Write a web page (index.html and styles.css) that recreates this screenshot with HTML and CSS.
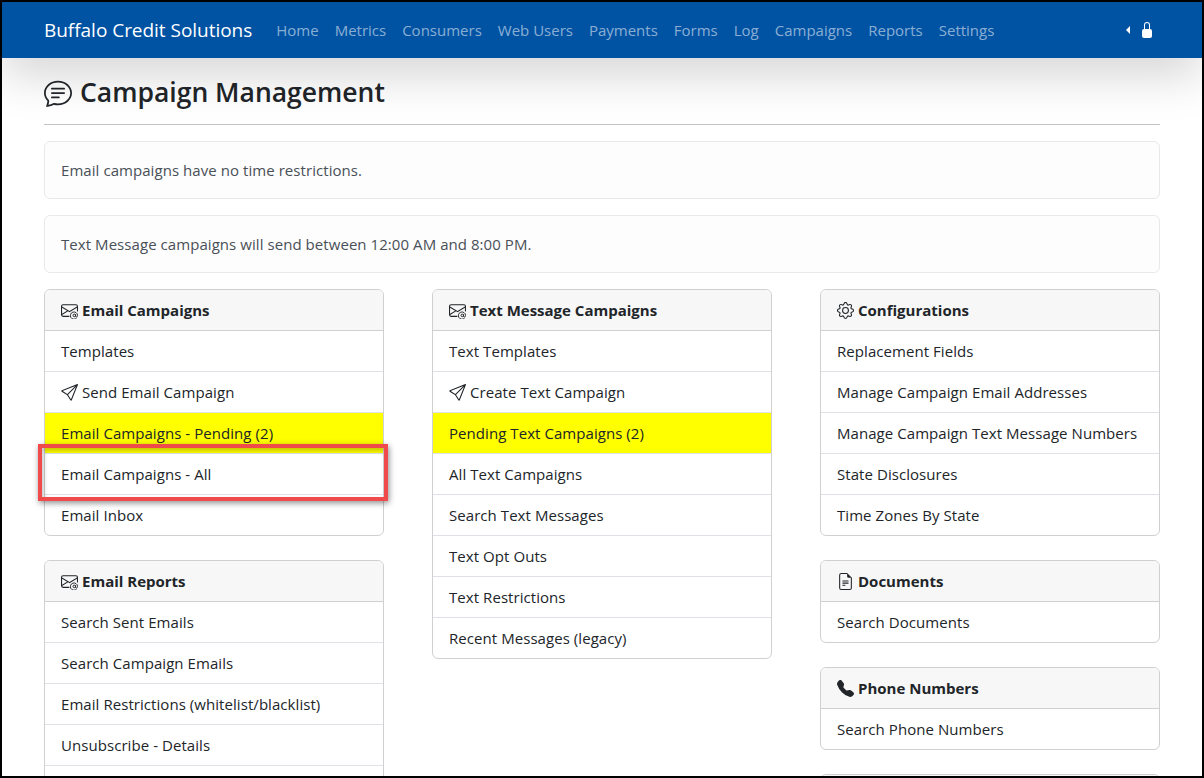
FILE: index.html
```html
<!DOCTYPE html>
<html lang="en">
<head>
<meta charset="utf-8">
<title>Campaign Management</title>
<link rel="stylesheet" href="styles.css">
</head>
<body>
<div class="frame">
  <nav class="navbar">
    <a class="brand">Buffalo Credit Solutions</a>
    <ul class="nav-links">
      <li>Home</li><li>Metrics</li><li>Consumers</li><li>Web Users</li><li>Payments</li><li>Forms</li><li>Log</li><li>Campaigns</li><li>Reports</li><li>Settings</li>
    </ul>
    <div class="nav-right">
      <span class="caret"></span>
      <svg class="lock" viewBox="0 0 16 16" fill="currentColor"><path d="M8 1a2 2 0 0 1 2 2v4H6V3a2 2 0 0 1 2-2zm3 6V3a3 3 0 0 0-6 0v4a2 2 0 0 0-2 2v5a2 2 0 0 0 2 2h6a2 2 0 0 0 2-2V9a2 2 0 0 0-2-2z"/></svg>
    </div>
  </nav>
  <main class="page">
    <h1 class="title">
      <svg class="title-icon" viewBox="0 0 16 16" fill="currentColor"><path d="M2.678 11.894a1 1 0 0 1 .287.801 10.97 10.97 0 0 1-.398 2c1.395-.323 2.247-.697 2.634-.893a1 1 0 0 1 .71-.074A8.06 8.06 0 0 0 8 14c3.996 0 7-2.807 7-6 0-3.192-3.004-6-7-6S1 4.808 1 8c0 1.468.617 2.83 1.678 3.894zm-.493 3.905a21.682 21.682 0 0 1-.713.129c-.2.032-.352-.176-.273-.362a9.68 9.68 0 0 0 .244-.637l.003-.01c.248-.72.45-1.548.524-2.319C.743 11.37 0 9.76 0 8c0-3.866 3.582-7 8-7s8 3.134 8 7-3.582 7-8 7a9.06 9.06 0 0 1-2.347-.306c-.52.263-1.639.742-3.468 1.105z"/><path d="M4 5.5a.5.5 0 0 1 .5-.5h7a.5.5 0 0 1 0 1h-7a.5.5 0 0 1-.5-.5zM4 8a.5.5 0 0 1 .5-.5h7a.5.5 0 0 1 0 1h-7A.5.5 0 0 1 4 8zm0 2.5a.5.5 0 0 1 .5-.5h4a.5.5 0 0 1 0 1h-4a.5.5 0 0 1-.5-.5z"/></svg>
      Campaign Management
    </h1>
    <hr class="rule">
    <div class="notice">Email campaigns have no time restrictions.</div>
    <div class="notice">Text Message campaigns will send between 12:00 AM and 8:00 PM.</div>
    <div class="columns">
      <div class="col">
        <section class="card">
          <header class="card-head"><svg class="ico" viewBox="0 0 16 16" fill="currentColor"><use href="#i-env"/></svg>Email Campaigns</header>
          <div class="item">Templates</div>
          <div class="item"><svg class="ico" viewBox="0 0 16 16" fill="currentColor"><use href="#i-send"/></svg>Send Email Campaign</div>
          <div class="item hot">Email Campaigns - Pending (2)</div>
          <div class="item">Email Campaigns - All</div>
          <div class="item">Email Inbox</div>
        </section>
        <section class="card">
          <header class="card-head"><svg class="ico" viewBox="0 0 16 16" fill="currentColor"><use href="#i-env"/></svg>Email Reports</header>
          <div class="item">Search Sent Emails</div>
          <div class="item">Search Campaign Emails</div>
          <div class="item">Email Restrictions (whitelist/blacklist)</div>
          <div class="item">Unsubscribe - Details</div>
          <div class="item">&nbsp;</div>
        </section>
      </div>
      <div class="col">
        <section class="card">
          <header class="card-head"><svg class="ico" viewBox="0 0 16 16" fill="currentColor"><use href="#i-env"/></svg>Text Message Campaigns</header>
          <div class="item">Text Templates</div>
          <div class="item"><svg class="ico" viewBox="0 0 16 16" fill="currentColor"><use href="#i-send"/></svg>Create Text Campaign</div>
          <div class="item hot">Pending Text Campaigns (2)</div>
          <div class="item">All Text Campaigns</div>
          <div class="item">Search Text Messages</div>
          <div class="item">Text Opt Outs</div>
          <div class="item">Text Restrictions</div>
          <div class="item">Recent Messages (legacy)</div>
        </section>
      </div>
      <div class="col">
        <section class="card">
          <header class="card-head"><svg class="ico" viewBox="0 0 16 16" fill="currentColor"><path d="M8 4.754a3.246 3.246 0 1 0 0 6.492 3.246 3.246 0 0 0 0-6.492zM5.754 8a2.246 2.246 0 1 1 4.492 0 2.246 2.246 0 0 1-4.492 0z"/><path d="M9.796 1.343c-.527-1.79-3.065-1.79-3.592 0l-.094.319a.873.873 0 0 1-1.255.52l-.292-.16c-1.64-.892-3.433.902-2.54 2.541l.159.292a.873.873 0 0 1-.52 1.255l-.319.094c-1.79.527-1.79 3.065 0 3.592l.319.094a.873.873 0 0 1 .52 1.255l-.16.292c-.892 1.64.901 3.434 2.541 2.54l.292-.159a.873.873 0 0 1 1.255.52l.094.319c.527 1.79 3.065 1.79 3.592 0l.094-.319a.873.873 0 0 1 1.255-.52l.292.16c1.64.893 3.434-.902 2.54-2.541l-.159-.292a.873.873 0 0 1 .52-1.255l.319-.094c1.79-.527 1.79-3.065 0-3.592l-.319-.094a.873.873 0 0 1-.52-1.255l.16-.292c.893-1.64-.902-3.433-2.541-2.54l-.292.159a.873.873 0 0 1-1.255-.52l-.094-.319zm-2.633.283c.246-.835 1.428-.835 1.674 0l.094.319a1.873 1.873 0 0 0 2.693 1.115l.291-.16c.764-.415 1.6.42 1.184 1.185l-.159.292a1.873 1.873 0 0 0 1.116 2.692l.318.094c.835.246.835 1.428 0 1.674l-.319.094a1.873 1.873 0 0 0-1.115 2.693l.16.291c.415.764-.42 1.6-1.185 1.184l-.291-.159a1.873 1.873 0 0 0-2.693 1.116l-.094.318c-.246.835-1.428.835-1.674 0l-.094-.319a1.873 1.873 0 0 0-2.692-1.115l-.292.16c-.764.415-1.6-.42-1.184-1.185l.159-.291A1.873 1.873 0 0 0 1.945 8.93l-.319-.094c-.835-.246-.835-1.428 0-1.674l.319-.094A1.873 1.873 0 0 0 3.06 4.377l-.16-.292c-.415-.764.42-1.6 1.185-1.184l.292.159a1.873 1.873 0 0 0 2.692-1.115l.094-.319z"/></svg>Configurations</header>
          <div class="item">Replacement Fields</div>
          <div class="item">Manage Campaign Email Addresses</div>
          <div class="item">Manage Campaign Text Message Numbers</div>
          <div class="item">State Disclosures</div>
          <div class="item">Time Zones By State</div>
        </section>
        <section class="card">
          <header class="card-head"><svg class="ico" viewBox="0 0 16 16" fill="currentColor"><path d="M5.5 7a.5.5 0 0 0 0 1h5a.5.5 0 0 0 0-1h-5zM5 9.5a.5.5 0 0 1 .5-.5h5a.5.5 0 0 1 0 1h-5a.5.5 0 0 1-.5-.5zm0 2a.5.5 0 0 1 .5-.5h2a.5.5 0 0 1 0 1h-2a.5.5 0 0 1-.5-.5z"/><path d="M9.5 0H4a2 2 0 0 0-2 2v12a2 2 0 0 0 2 2h8a2 2 0 0 0 2-2V4.5L9.5 0zm0 1v2A1.5 1.5 0 0 0 11 4.5h2V14a1 1 0 0 1-1 1H4a1 1 0 0 1-1-1V2a1 1 0 0 1 1-1h5.5z"/></svg>Documents</header>
          <div class="item">Search Documents</div>
        </section>
        <section class="card">
          <header class="card-head"><svg class="ico" viewBox="0 0 16 16" fill="currentColor"><path d="M1.885.511a1.745 1.745 0 0 1 2.61.163L6.29 2.98c.329.423.445.974.315 1.494l-.547 2.19a.678.678 0 0 0 .178.643l2.457 2.457a.678.678 0 0 0 .644.178l2.189-.547a1.745 1.745 0 0 1 1.494.315l2.306 1.794c.829.645.905 1.87.163 2.611l-1.034 1.034c-.74.74-1.846 1.065-2.877.702a18.634 18.634 0 0 1-7.01-4.42 18.634 18.634 0 0 1-4.42-7.009c-.362-1.03-.037-2.137.703-2.877L1.885.511z"/></svg>Phone Numbers</header>
          <div class="item">Search Phone Numbers</div>
        </section>
        <section class="card">
          <header class="card-head">&nbsp;</header>
        </section>
      </div>
    </div>
  </main>
  <div class="callout"></div>
</div>
<svg class="defs" aria-hidden="true">
  <symbol id="i-env" viewBox="0 0 16 16">
    <path d="M2 2a2 2 0 0 0-2 2v8.01A2 2 0 0 0 2 14h5.5a.5.5 0 0 0 0-1H2a1 1 0 0 1-.966-.741l5.64-3.471L8 9.583l7-4.2V8.5a.5.5 0 0 0 1 0V4a2 2 0 0 0-2-2H2Zm3.708 6.208L1 11.105V5.383l4.708 2.825ZM1 4.217V4a1 1 0 0 1 1-1h12a1 1 0 0 1 1 1v.217l-7 4.2-7-4.2Z"/>
    <path fill="none" stroke="currentColor" stroke-width=".9" d="M14.6 15.2a3.4 3.4 0 1 1 1-2.6c0 1.9-1.9 1.9-1.9.6v-1.6M13.7 12.6a1.2 1.2 0 1 1-2.4 0 1.2 1.2 0 0 1 2.4 0Z"/>
  </symbol>
  <symbol id="i-send" viewBox="0 0 16 16">
    <path d="M15.854.146a.5.5 0 0 1 .11.54l-5.819 14.547a.75.75 0 0 1-1.329.124l-3.178-4.995L.643 7.184a.75.75 0 0 1 .124-1.33L15.314.037a.5.5 0 0 1 .54.11ZM6.636 10.07l2.761 4.338L14.13 2.576 6.636 10.07Zm6.787-8.201L1.591 6.602l4.339 2.76 7.494-7.493Z"/>
  </symbol>
</svg>
</body>
</html>
```
FILE: styles.css
```css
* { box-sizing: border-box; }
html, body { margin: 0; padding: 0; }
body {
  font-family: "Open Sans", "Noto Sans", "Liberation Sans", sans-serif;
  font-size: 15px;
  line-height: 24px;
  letter-spacing: .06px;
  color: #212529;
  background: #fff;
}
.frame {
  position: relative;
  width: 1204px;
  height: 778px;
  border: 2px solid #000;
  overflow: hidden;
  background: #fff;
}
.defs { position: absolute; width: 0; height: 0; }
.navbar {
  position: relative;
  z-index: 1;
  display: flex;
  align-items: center;
  height: 56px;
  padding: 0 42px;
  background: #0052a3;
  box-shadow: 0 16px 48px rgba(0, 0, 0, .175);
  letter-spacing: 0;
}
.brand { font-size: 19px; letter-spacing: -.03px; color: #fff; margin-right: 16px; }
.nav-links { display: flex; list-style: none; margin: 0; padding: 0; }
.nav-links li { padding: 0 8px; color: rgba(255, 255, 255, .55); }
.nav-right { margin-left: auto; display: flex; align-items: center; gap: 9px; color: #fff; padding-right: 5px; }
.caret {
  width: 0; height: 0;
  border-top: 4px solid transparent;
  border-bottom: 4px solid transparent;
  border-right: 4px solid #fff;
}
.lock { width: 16px; height: 16px; }
.page { padding: 15px 42px 0; }
.title {
  display: flex;
  align-items: center;
  gap: 8px;
  margin: 0;
  height: 38px;
  font-size: 26.5px;
  font-weight: 600;
  letter-spacing: 0;
  line-height: 38px;
}
.title-icon { width: 28px; height: 28px; position: relative; top: 1px; }
.rule { border: 0; border-top: 1px solid #c4c4c4; margin: 13px 0 16px; }
.notice {
  height: 58px;
  padding: 16px;
  margin-bottom: 16px;
  border: 1px solid #e9e9e9;
  border-radius: 6px;
  background: #fdfdfd;
  color: #495057;
}
.columns { display: grid; grid-template-columns: repeat(3, 340px); column-gap: 48px; align-items: start; }
.col { display: flex; flex-direction: column; gap: 24px; }
.card {
  border: 1px solid #d0d0d0;
  border-radius: 6px;
  overflow: hidden;
  background: #fff;
}
.card-head {
  display: flex;
  align-items: center;
  height: 41px;
  padding: 0 16px;
  background: #f7f7f7;
  border-bottom: 1px solid #d0d0d0;
  font-weight: 700;
  letter-spacing: 0;
}
.ico { width: 17px; height: 17px; margin-right: 4px; flex: none; }
.item {
  display: flex;
  align-items: center;
  height: 41px;
  padding: 0 16px;
  border-bottom: 1px solid #dee2e6;
}
.item:last-child { border-bottom: 0; height: 40px; }
.hot { background: #ff0; }
.callout {
  position: absolute;
  left: 36px;
  top: 442px;
  width: 350px;
  height: 57px;
  border: 4px solid #f04a4a;
  box-shadow: 1px 2px 6px rgba(0, 0, 0, .45), inset 2px 3px 4px rgba(0, 0, 0, .22);
}
```
